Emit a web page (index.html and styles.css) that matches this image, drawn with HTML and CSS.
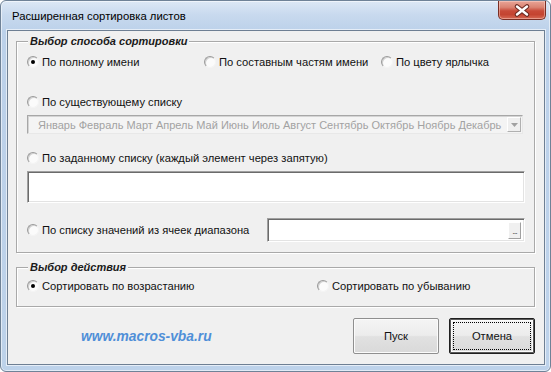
FILE: index.html
```html
<!DOCTYPE html>
<html lang="ru">
<head>
<meta charset="utf-8">
<title>Расширенная сортировка листов</title>
<link rel="stylesheet" href="styles.css">
</head>
<body>
<div class="window">
  <div class="titlebar">
    <span class="title">Расширенная сортировка листов</span>
    <button class="close" aria-label="Закрыть">
      <svg width="46" height="17" viewBox="0 0 46 17">
        <path d="M18 4.5 L28 12.5 M28 4.5 L18 12.5" stroke="#6b2a22" stroke-width="4.6" stroke-linecap="round" fill="none"/>
        <path d="M18 4.5 L28 12.5 M28 4.5 L18 12.5" stroke="#ffffff" stroke-width="2.4" stroke-linecap="round" fill="none"/>
      </svg>
    </button>
  </div>
  <div class="client">
    <fieldset class="group group-method">
      <legend>Выбор способа сортировки</legend>
      <div class="group-body">
        <div class="row row-three">
          <label class="radio"><span class="dot checked"></span>По полному имени</label>
          <label class="radio"><span class="dot"></span>По составным частям имени</label>
          <label class="radio"><span class="dot"></span>По цвету ярлычка</label>
        </div>
        <div class="row row-gap">
          <label class="radio"><span class="dot"></span>По существующему списку</label>
        </div>
        <div class="combo">
          <span class="combo-text">Январь Февраль Март Апрель Май Июнь Июль Август Сентябрь Октябрь Ноябрь Декабрь</span>
          <span class="combo-btn">
            <svg width="7" height="4" viewBox="0 0 7 4"><path d="M0 0 H7 L3.5 4 Z" fill="#a0a0a0"/></svg>
          </span>
        </div>
        <div class="row row-mid">
          <label class="radio"><span class="dot"></span>По заданному списку (каждый элемент через запятую)</label>
        </div>
        <div class="textbox textbox-big"></div>
        <div class="row row-range">
          <label class="radio"><span class="dot"></span>По списку значений из ячеек диапазона</label>
          <div class="textbox textbox-range"><span class="dots-btn">...</span></div>
        </div>
      </div>
    </fieldset>
    <fieldset class="group group-action">
      <legend>Выбор действия</legend>
      <div class="group-body2">
        <div class="row row-two">
          <label class="radio"><span class="dot checked"></span>Сортировать по возрастанию</label>
          <label class="radio"><span class="dot"></span>Сортировать по убыванию</label>
        </div>
      </div>
    </fieldset>
    <div class="footer">
      <span class="link">www.macros-vba.ru</span>
      <div class="buttons">
        <button class="btn">Пуск</button>
        <button class="btn btn-default"><span class="focus">Отмена</span></button>
      </div>
    </div>
  </div>
</div>
</body>
</html>
```

FILE: styles.css
```css
* { box-sizing: border-box; }

html, body {
  margin: 0;
  padding: 0;
  background: #ffffff;
}

body {
  width: 551px;
  height: 372px;
  font-family: "Liberation Sans", Arial, sans-serif;
  font-size: 11.2px;
  color: #000;
}

.window {
  width: 551px;
  height: 372px;
  border: 1px solid #6f8297;
  border-radius: 6px;
  background: linear-gradient(to bottom, #dde8f5 0px, #c8d9ee 14px, #bcd1ea 30px, #bdd2ea 100%);
  display: flex;
  flex-direction: column;
  box-shadow: inset 0 0 0 1px rgba(255, 255, 255, 0.55);
}

.titlebar {
  height: 29px;
  display: flex;
  justify-content: space-between;
  align-items: flex-start;
  padding: 0 4px 0 11px;
  flex: none;
}

.title {
  align-self: center;
  font-size: 11.3px;
  color: #000;
  padding-top: 1px;
}

.close {
  width: 48px;
  height: 19px;
  padding: 0;
  margin: 0;
  border: 1px solid #7a2e24;
  border-top: none;
  border-radius: 0 0 5px 5px;
  background: linear-gradient(to bottom, #e9a597 0%, #da8372 35%, #c84a38 55%, #c44431 75%, #d66a55 100%);
  box-shadow: inset 0 0 0 1px rgba(255, 220, 210, 0.45);
  display: flex;
  align-items: center;
  justify-content: center;
}

.close svg { display: block; }

.client {
  flex: 1;
  margin: 0 5px 6px 6px;
  border: 1px solid #6e7f93;
  background: #f0f0f0;
  box-shadow: 0 0 0 1px rgba(255, 255, 255, 0.6);
  display: flex;
  flex-direction: column;
}

.group {
  margin: 0 9px 0 8px;
  padding: 0;
  border: 1px solid #a9a9a9;
  box-shadow: inset 1px 1px 0 #ffffff, 1px 1px 0 #ffffff;
  min-width: 0;
}

.group-method { margin-top: 3px; }
.group-action { margin-top: 7px; }

.group legend {
  margin-left: 11px;
  padding: 0 2px;
  font-weight: bold;
  font-style: italic;
  font-size: 11px;
  line-height: 14px;
  background: #f0f0f0;
  color: #1a1a1a;
}

.group-body {
  padding: 6px 9px 10px 10px;
  display: flex;
  flex-direction: column;
}

.group-body2 {
  padding: 4px 9px 12px 10px;
}

.row {
  height: 16px;
  line-height: 16px;
}

.row-three {
  display: grid;
  grid-template-columns: 177px 177px 1fr;
}

.row-two {
  display: grid;
  grid-template-columns: 290px 1fr;
}

.row-gap { margin-top: 24px; }
.row-mid { margin-top: 16px; }

.row-range {
  margin-top: 15px;
  height: 24px;
  display: flex;
  align-items: center;
  justify-content: space-between;
}

.radio {
  display: inline-flex;
  align-items: center;
  gap: 3px;
  white-space: nowrap;
  color: #111;
}

.dot {
  width: 12px;
  height: 12px;
  border-radius: 50%;
  border: 1px solid;
  border-color: #9a9a9a #f4f4f4 #f4f4f4 #9a9a9a;
  background: #fbfbfb;
  box-shadow: inset 1px 1px 0 #d0d0d0;
  display: inline-flex;
  align-items: center;
  justify-content: center;
  flex: none;
}

.dot.checked::after {
  content: "";
  width: 4px;
  height: 4px;
  border-radius: 50%;
  background: #000;
}

.combo {
  margin-top: 5px;
  height: 19px;
  border: 1px solid;
  border-color: #a7a7a7 #e8e8e8 #e8e8e8 #a7a7a7;
  box-shadow: inset 1px 1px 0 #d4d4d4;
  background: #f4f4f4;
  display: flex;
  align-items: center;
  padding: 0 1px 0 10px;
  margin-right: 2px;
}

.combo-text {
  flex: 1;
  font-size: 11px;
  color: #a2a2a2;
  white-space: nowrap;
}

.combo-btn {
  width: 14px;
  height: 15px;
  border: 1px solid;
  border-color: #ffffff #b0b0b0 #b0b0b0 #ffffff;
  background: #efefef;
  display: flex;
  align-items: center;
  justify-content: center;
  flex: none;
}

.combo-btn svg { display: block; }

.textbox {
  background: #ffffff;
  border: 1px solid;
  border-color: #a0a0a0 #ffffff #ffffff #a0a0a0;
  box-shadow: inset 1px 1px 0 #6b6b6b, inset -1px -1px 0 #e3e3e3;
}

.textbox-big {
  margin-top: 5px;
  height: 32px;
}

.textbox-range {
  width: 258px;
  height: 24px;
  display: flex;
  justify-content: flex-end;
  align-items: center;
  padding: 2px 3px 2px 2px;
}

.dots-btn {
  width: 13px;
  height: 17px;
  border: 1px solid;
  border-color: #ffffff #a0a0a0 #a0a0a0 #ffffff;
  background: #f0f0f0;
  font-size: 9px;
  line-height: 9px;
  color: #555;
  display: flex;
  justify-content: center;
  align-items: flex-end;
  padding-bottom: 2px;
  letter-spacing: -1px;
}

.footer {
  flex: 1;
  display: flex;
  align-items: flex-start;
  padding: 11px 9px 0 73px;
}

.link {
  font-family: "Liberation Sans", Arial, sans-serif;
  font-weight: bold;
  font-style: italic;
  font-size: 13.8px;
  color: #4f8fd8;
  margin-top: 11px;
  line-height: 16px;
}

.buttons {
  margin-left: auto;
  display: flex;
  gap: 10px;
}

.btn {
  width: 86px;
  height: 36px;
  padding: 0;
  margin: 0;
  font-family: "Liberation Sans", Arial, sans-serif;
  font-size: 11.2px;
  color: #111;
  border: 1px solid #8f8f8f;
  border-radius: 2px;
  background: linear-gradient(to bottom, #f4f4f4 0%, #ececec 48%, #e1e1e1 52%, #d9d9d9 100%);
  box-shadow: inset 0 0 0 1px #fbfbfb;
  display: flex;
  align-items: center;
  justify-content: center;
}

.btn-default {
  border: 1px solid #1f1f1f;
  box-shadow: inset 0 0 0 1px #5a5a5a, inset 0 0 0 2px #fafafa;
  padding: 3px;
}

.focus {
  flex: 1;
  align-self: stretch;
  border: 1px dotted #000;
  display: flex;
  align-items: center;
  justify-content: center;
}
```
